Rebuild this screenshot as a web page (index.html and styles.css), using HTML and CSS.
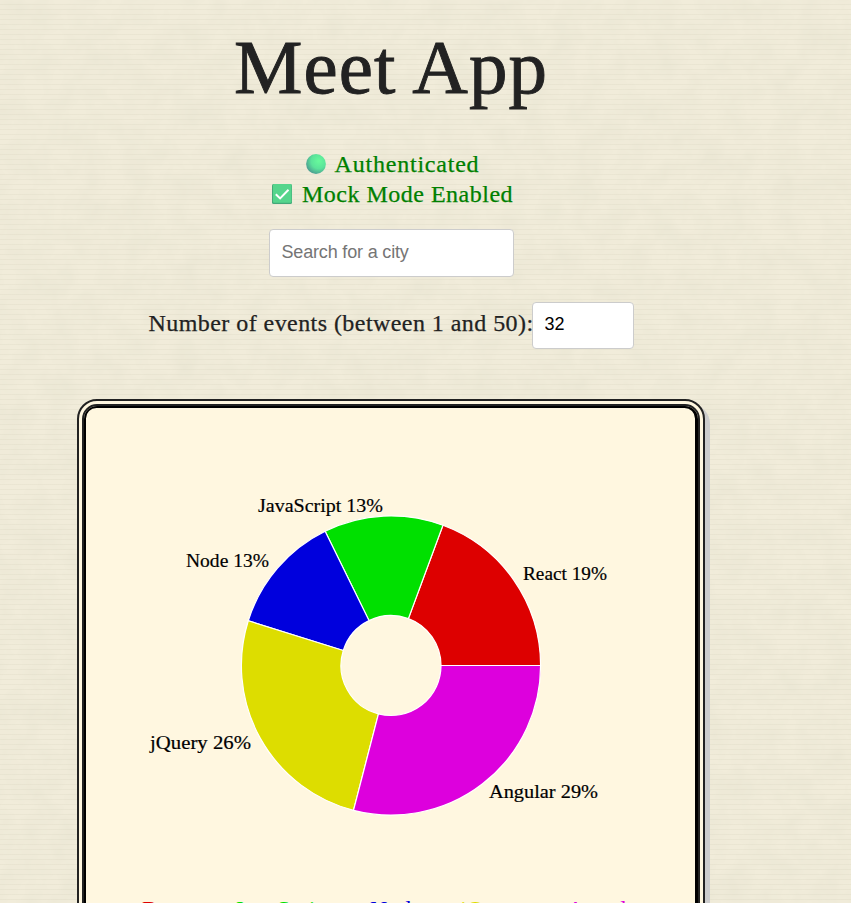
FILE: index.html
```html
<!DOCTYPE html>
<html lang="en">
<head>
<meta charset="utf-8">
<title>Meet App</title>
<link rel="stylesheet" href="styles.css">
</head>
<body>
<svg class="paper" aria-hidden="true">
  <filter id="grain" x="0" y="0" width="100%" height="100%">
    <feTurbulence type="fractalNoise" baseFrequency="0.04 0.04" numOctaves="3" seed="8"/>
    <feColorMatrix values="0 0 0 0 .65  0 0 0 0 .65  0 0 0 0 .52  .3 0 0 0 -.09"/>
  </filter>
  <rect width="100%" height="100%" filter="url(#grain)"/>
</svg>
<main class="app">
  <h1 class="title">Meet App</h1>
  <div class="status">
    <p class="status-line auth">
      <svg class="status-icon" viewBox="0 0 20 20"><defs><radialGradient id="ball" cx=".64" cy=".35" r=".7"><stop offset="0" stop-color="#68fa9c"/><stop offset=".55" stop-color="#5be39a"/><stop offset="1" stop-color="#4b9b91"/></radialGradient></defs><circle cx="10" cy="10" r="9.9" fill="url(#ball)"/></svg>
      <span>Authenticated</span>
    </p>
    <p class="status-line mock">
      <svg class="status-icon" viewBox="0 0 20 20"><rect width="20" height="20" rx="1.5" fill="#43a878"/><rect x="1" width="18.5" height="18.8" rx="1" fill="#55d58c"/><path d="M3.8 10.2l4.3 4.2L16.5 5.8" fill="none" stroke="#fff" stroke-width="2"/></svg>
      <span>Mock Mode Enabled</span>
    </p>
  </div>
  <input class="field city" type="text" placeholder="Search for a city">
  <div class="events-row">
    <label class="events-label" for="count">Number of events (between 1 and 50):</label>
    <input class="field count" id="count" type="text" value="32">
  </div>
  <section class="card">
    <svg class="chart" viewBox="0 0 608 400">
      <g transform="translate(304 200.5)" stroke="#fff" stroke-width="1.2">
        <path fill="#d00" d="M149.6 0A149.6 149.6 0 0 0 51.96-140.29L17.37-46.89A50 50 0 0 1 50 0Z"/>
        <path fill="#00e000" d="M51.96-140.29A149.6 149.6 0 0 0-65.88-134.31L-22.02-44.89A50 50 0 0 1 17.37-46.89Z"/>
        <path fill="#00d" d="M-65.88-134.31A149.6 149.6 0 0 0-142.73-44.79L-47.71-14.97A50 50 0 0 1-22.02-44.89Z"/>
        <path fill="#dd0" d="M-142.73-44.79A149.6 149.6 0 0 0-37.5 144.83L-12.54 48.41A50 50 0 0 1-47.71-14.97Z"/>
        <path fill="#d0d" d="M-37.5 144.83A149.6 149.6 0 0 0 149.6 0L50 0A50 50 0 0 1-12.54 48.41Z"/>
      </g>
      <g class="slice-label">
        <text x="436" y="115" textLength="84" lengthAdjust="spacingAndGlyphs">React 19%</text>
        <text x="171" y="47" textLength="125" lengthAdjust="spacingAndGlyphs">JavaScript 13%</text>
        <text x="99" y="102" textLength="83" lengthAdjust="spacingAndGlyphs">Node 13%</text>
        <text x="63" y="284" textLength="101" lengthAdjust="spacingAndGlyphs">jQuery 26%</text>
        <text x="402" y="333" textLength="109" lengthAdjust="spacingAndGlyphs">Angular 29%</text>
      </g>
    </svg>
    <ul class="legend">
      <li class="react">React</li>
      <li class="javascript">JavaScript</li>
      <li class="node">Node</li>
      <li class="jquery">jQuery</li>
      <li class="angular">Angular</li>
    </ul>
  </section>
</main>
</body>
</html>
```
FILE: styles.css
```css
* { box-sizing: border-box; }

html {
  height: 100%;
  overflow: hidden;
}

body {
  margin: 0;
  height: 100%;
  overflow: hidden;
  color: #222;
  font-family: "Liberation Serif", serif;
  font-size: 24px;
  background: #f1ecda repeating-linear-gradient(to bottom, transparent 0 4px, rgba(125, 125, 90, .06) 4px 5px);
}

.paper {
  position: absolute;
  inset: 0;
  width: 100%;
  height: 100%;
  z-index: -1;
}

.app {
  width: 782px;
  display: flex;
  flex-direction: column;
  align-items: center;
}

.title {
  margin: 22px 0 37px;
  font-size: 77px;
  font-weight: 400;
  line-height: 90px;
  letter-spacing: 1px;
  -webkit-text-stroke: .9px #222;
}

.status {
  color: #008000;
  padding-left: 3px;
}

.status-line {
  margin: 0;
  height: 30px;
  line-height: 28px;
  display: flex;
  justify-content: center;
  align-items: center;
  white-space: nowrap;
  -webkit-text-stroke: .25px currentColor;
}

.status-icon {
  width: 20px;
  height: 20px;
}

.auth { gap: 9px; letter-spacing: .78px; }
.mock { gap: 10px; letter-spacing: .5px; }

.field {
  height: 48px;
  padding: 0 12px 2px;
  border: 1px solid #ccc;
  border-radius: 4px;
  background: #fff;
  color: #000;
  font: 18px "Liberation Sans", sans-serif;
}

.field::placeholder {
  color: #757575;
  opacity: 1;
  letter-spacing: -.17px;
}

.city {
  width: 245px;
  margin-top: 20px;
}

.events-row {
  display: flex;
  align-items: center;
  margin-top: 25px;
}

.events-label {
  width: 383px;
  letter-spacing: .44px;
  white-space: nowrap;
  padding-bottom: 4px;
  -webkit-text-stroke: .25px currentColor;
}

.count {
  width: 102px;
  height: 47px;
}

.card {
  width: 628px;
  height: 640px;
  margin-top: 50px;
  padding-top: 59px;
  border: 7px double #222;
  border-radius: 20px;
  background: #fff7e0;
  box-shadow: 5px 5px 0 #ccc, inset -.5px -.5px 0 2.5px #000;
  display: flex;
  flex-direction: column;
  align-items: center;
  flex: none;
}

.chart {
  width: 608px;
  height: 400px;
  flex: none;
}

.slice-label {
  font-size: 19px;
  fill: #000;
  stroke: #000;
  stroke-width: .2px;
}

.legend {
  margin: 29px 0 0;
  padding: 0;
  list-style: none;
  display: grid;
  grid-template-columns: 92px 136px 90px 107px 73px;
  line-height: 30px;
}

.react { color: #d00; }
.javascript { color: #00e000; }
.node { color: #00d; }
.jquery { color: #dd0; }
.angular { color: #d0d; }
```
